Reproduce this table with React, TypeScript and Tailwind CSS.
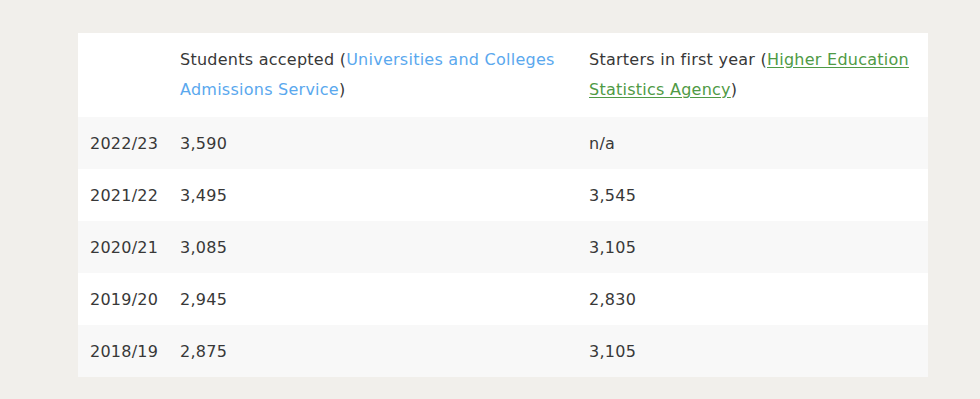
const rows = [
  { year: "2022/23", accepted: "3,590", starters: "n/a" },
  { year: "2021/22", accepted: "3,495", starters: "3,545" },
  { year: "2020/21", accepted: "3,085", starters: "3,105" },
  { year: "2019/20", accepted: "2,945", starters: "2,830" },
  { year: "2018/19", accepted: "2,875", starters: "3,105" },
];

export default function App() {
  return (
    <div
      className="h-[399px] w-[980px] bg-[#f1efeb] pl-[78px] pt-[33px] text-[16px] tracking-[0.25px] text-[#383838]"
      style={{ fontFamily: "'DejaVu Sans', sans-serif" }}
    >
      <div className="w-[850px] bg-white">
        <div className="grid grid-cols-[90px_409px_1fr] leading-[30px]">
          <div />
          <div className="px-3 py-3">
            Students accepted (
            <a className="text-[#5aa8ee]">Universities and Colleges Admissions Service</a>)
          </div>
          <div className="px-3 py-3">
            Starters in first year (
            <a className="text-[#4f9a45] underline underline-offset-2">
              Higher Education Statistics Agency
            </a>
            )
          </div>
        </div>
        {rows.map((r, i) => (
          <div
            key={r.year}
            className={
              "grid h-[52px] grid-cols-[90px_409px_1fr] items-center pt-[1px] " +
              (i % 2 === 0 ? "bg-[#f8f8f8]" : "bg-white")
            }
          >
            <div className="px-3">{r.year}</div>
            <div className="px-3">{r.accepted}</div>
            <div className="px-3">{r.starters}</div>
          </div>
        ))}
      </div>
    </div>
  );
}
